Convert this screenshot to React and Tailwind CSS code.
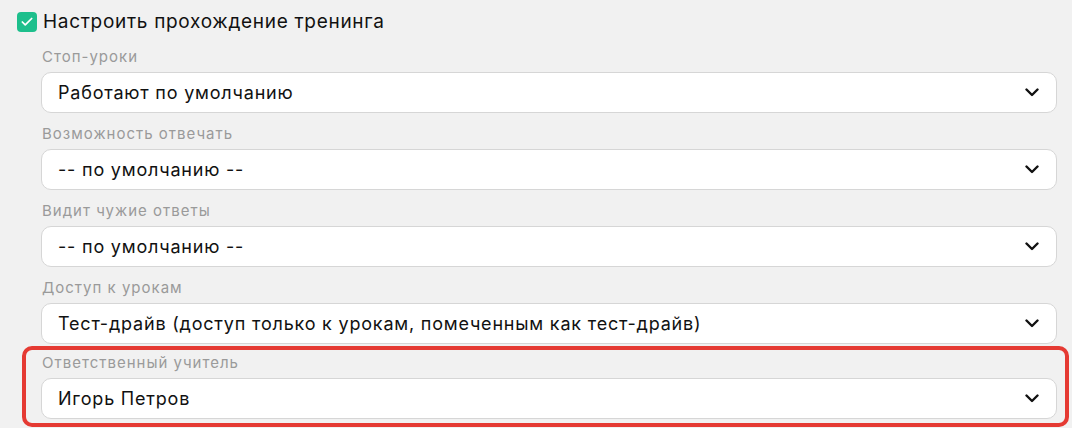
import { Check } from "lucide-react";

const FIELDS = [
  { label: "Стоп-уроки", value: "Работают по умолчанию" },
  { label: "Возможность отвечать", value: "-- по умолчанию --" },
  { label: "Видит чужие ответы", value: "-- по умолчанию --" },
  {
    label: "Доступ к урокам",
    value: "Тест-драйв (доступ только к урокам, помеченным как тест-драйв)",
  },
];

function Chevron() {
  return (
    <svg width="14" height="9" viewBox="0 0 14 9" className="shrink-0">
      <path d="M1.5 1.5 L7 7 L12.5 1.5" fill="none" stroke="#111" strokeWidth="2.4" strokeLinecap="round" strokeLinejoin="round" />
    </svg>
  );
}

function Field({ label, value }) {
  return (
    <div className="flex flex-col">
      <div className="h-[22px] text-[15px] leading-[22px] tracking-[1px] text-[#9a9a9a] pl-px">{label}</div>
      <div className="mt-[4px] h-[41px] rounded-[10px] border border-[#d6d6d6] bg-white flex items-center justify-between pl-4 pr-[17px]">
        <span className="text-[18px] tracking-[0.8px] text-[#111]">{value}</span>
        <Chevron />
      </div>
    </div>
  );
}

export default function App() {
  return (
    <div className="w-[1072px] h-[428px] overflow-hidden bg-[#f1f1f1] font-['Inter',sans-serif]">
      <div className="flex items-center gap-[6px] pl-[17px] pt-[12px] h-[32px]">
        <div className="w-[20px] h-[20px] rounded-[4px] bg-[#1dbf8c] flex items-center justify-center">
          <Check size={14} strokeWidth={3} className="text-white" />
        </div>
        <span className="text-[19px] tracking-[0.7px] text-[#111]">Настроить прохождение тренинга</span>
      </div>
      <div className="pl-[41px] pr-[15px] pt-[14px] flex flex-col gap-[10px]">
        {FIELDS.map((f) => (
          <Field key={f.label} {...f} />
        ))}
        <div className="mt-[-8px] ml-[-19px] mr-[-12px] pl-[15px] pr-[8px] pt-[2px] pb-[4px] border-[4px] border-[#e53a33] rounded-[10px]">
          <Field label="Ответственный учитель" value="Игорь Петров" />
        </div>
      </div>
    </div>
  );
}
